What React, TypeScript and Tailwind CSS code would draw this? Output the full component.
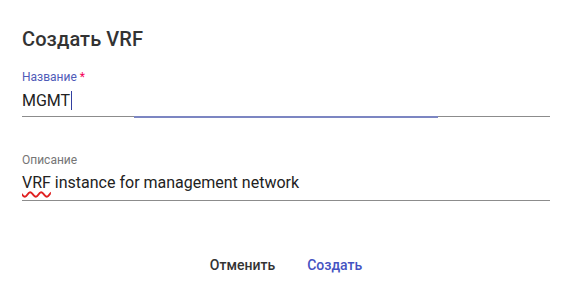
export default function App() {
  return (
    <div
      className="w-[572px] h-[296px] bg-white flex flex-col px-[22px]"
      style={{ fontFamily: "Roboto, 'Noto Sans', sans-serif" }}
    >
      <div className="pt-[26px] h-[64px] text-[20px] leading-[26px] font-medium text-[#333333] tracking-[0.1px]">
        Создать VRF
      </div>
      <div className="flex flex-col pt-[6px]">
        <div className="text-[12px] leading-[14px] text-[#4f5bb8]">
          Название <span className="text-[#f50057]">*</span>
        </div>
        <div className="relative h-[33px] flex items-center text-[16px] text-[#222222] border-b border-[#8c8c8c]">
          <span className="pt-[1px]">MGMT</span>
          <span className="w-[1px] h-[19px] bg-[#3340a0] ml-[1px]"></span>
          <div className="absolute left-[112px] w-[304px] bottom-[-2px] h-[2px] bg-[#7c86c2]"></div>
        </div>
      </div>
      <div className="flex flex-col pt-[36px]">
        <div className="text-[12px] leading-[14px] text-[#757575]">Описание</div>
        <div className="h-[34px] flex items-center text-[16px] text-[#222222] border-b border-[#8c8c8c]">
          <span className="pb-[1px]">
            <span className="underline decoration-wavy decoration-[#e02020] decoration-[1.5px] underline-offset-[3px]">VRF</span>{" "}
            instance for management network
          </span>
        </div>
      </div>
      <div className="flex justify-center gap-[32px] pt-[54px] text-[14px] font-medium">
        <span className="text-[#333333]">Отменить</span>
        <span className="text-[#4553c2]">Создать</span>
      </div>
    </div>
  );
}
